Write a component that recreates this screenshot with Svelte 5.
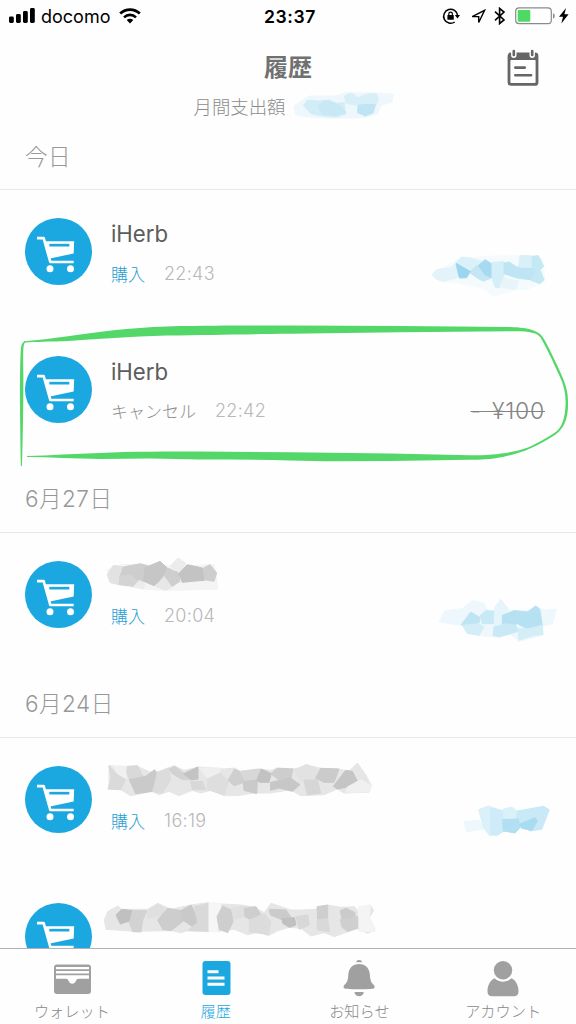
<script>
  // Mosaic patches: every polygon is [fill, points]
  const monthTotal = {
    width: 110, height: 40, box: '15 260 330 120', margin: -2,
    shapes: [
      ['#eef8fc', '24,320 55,300 70,290 150,290 180,280 270,282 322,285 318,308 285,318 275,342 240,354 130,357 60,352 28,345'],
      ['#d3edf8', '52,318 65,303 100,305 130,302 150,312 175,310 178,345 150,353 110,350 75,343'],
      ['#c8e8f5', '95,320 118,305 145,310 165,322 180,340 150,348 110,345'],
      ['#d8eff8', '175,290 195,281 215,295 245,284 270,282 277,300 270,318 240,322 215,318 180,312'],
      ['#bfe5f5', '216,318 240,315 268,316 262,340 238,350 215,340']
    ]
  };

  const amountBlobs = [
    {
      width: 140, height: 60, box: '0 0 420 180', margin: -15,
      shapes: [
        ['#f5fbfd', '38,95 70,75 110,50 190,40 300,38 368,45 375,115 320,140 290,140 220,160 190,135 100,118 60,115'],
        ['#e2f4fa', '36,95 50,80 90,74 108,62 118,90 110,105 70,115 48,108'],
        ['#daf1f9', '108,60 125,42 150,45 185,55 180,75 155,82'],
        ['#c3e7f5', '148,88 170,68 192,85 215,104 190,115 170,104'],
        ['#9bd6ee', '108,61 151,85 140,104 118,105'],
        ['#a5daf0', '175,68 195,50 214,62 215,104 195,95'],
        ['#d5eff9', '216,58 250,56 252,104 238,135 225,132 216,105'],
        ['#bfe5f4', '252,60 268,57 290,72 335,72 352,82 332,110 290,105 252,92'],
        ['#d9f0f8', '300,38 335,38 340,74 296,72'],
        ['#c5e8f5', '336,40 355,38 371,70 360,80 372,110 360,122 332,112 350,85 337,72'],
        ['#e7f5fb', '250,104 295,115 288,140 262,136 240,130']
      ]
    },
    {
      width: 140, height: 60, box: '18 2 420 180', margin: -20,
      shapes: [
        ['#eef8fc', '60,110 78,76 130,70 160,45 195,55 205,75 230,75 245,42 270,75 335,75 355,62 375,75 412,72 400,115 372,122 370,150 300,168 275,148 225,155 180,150 145,144 130,120'],
        ['#bfe5f4', '127,118 155,80 182,96 180,115 150,125'],
        ['#c8e9f6', '183,92 200,76 228,78 224,115 190,115'],
        ['#d4eef8', '130,120 180,115 195,125 180,150 145,144'],
        ['#e5f5fb', '228,65 245,42 268,72 250,88 248,118 225,122'],
        ['#b6e1f3', '250,90 285,76 325,80 350,62 362,72 370,120 325,130 295,115 275,122 250,115'],
        ['#c9e9f6', '225,125 262,115 290,120 298,138 275,145 240,155 222,150'],
        ['#d4eef8', '328,130 370,120 372,148 345,150 300,165 298,130']
      ]
    },
    {
      width: 130, height: 60, box: '0 0 390 180', margin: -25,
      shapes: [
        ['#eef8fc', '72,92 118,88 130,115 80,122'],
        ['#daf1f9', '116,56 145,45 190,60 190,120 150,135 130,110'],
        ['#cfebf7', '152,52 190,60 192,120 170,134 152,130'],
        ['#d9f1f9', '190,55 215,48 238,65 230,85 192,84'],
        ['#c9e9f6', '232,60 310,46 328,56 305,115 270,120 230,90'],
        ['#b3dff2', '188,86 235,84 240,110 225,126 190,120'],
        ['#a9dcf1', '238,100 285,80 292,90 275,118 245,112']
      ]
    }
  ];

  const titleBlobs = [
    {
      width: 120, height: 44, box: '40 13 360 132',
      shapes: [
        ['#f4f4f4', '50,60 90,45 200,45 240,50 262,25 285,48 370,45 378,90 382,118 260,122 200,122 135,115 60,100'],
        ['#e2e2e2', '50,75 68,47 98,52 85,105 58,98'],
        ['#cdcdcd', '98,52 150,42 175,50 165,95 140,98 120,90 88,82'],
        ['#d4d4d4', '86,80 120,75 142,95 130,110 86,105'],
        ['#c6c6c6', '162,55 208,35 230,55 215,88 190,108 160,95'],
        ['#cecece', '230,55 262,68 268,95 245,110 220,85'],
        ['#ececec', '240,48 262,25 285,40 270,65 245,60'],
        ['#c3c3c3', '264,72 290,45 335,55 342,92 305,95 275,98'],
        ['#cecece', '338,55 358,45 378,70 370,95 342,90'],
        ['#e7e7e7', '195,110 220,80 243,112 225,122'],
        ['#ececec', '130,110 145,92 162,100 158,118']
      ]
    },
    {
      width: 270, height: 44, box: '40 28 810 132',
      shapes: [
        ['#e6e6e6', '55,48 110,55 140,50 180,68 205,65 250,48 280,62 325,52 400,58 430,55 450,65 500,58 540,62 560,55 620,58 645,45 690,56 740,58 775,65 800,40 825,75 842,108 835,128 760,130 740,118 700,135 630,138 600,120 540,130 490,130 440,138 400,138 360,122 330,130 305,122 265,138 235,125 205,135 185,125 120,138 90,120 55,118'],
        ['#dadada', '55,48 80,75 105,88 90,120 52,118 62,85'],
        ['#f0f0f0', '65,48 108,50 108,88 80,72'],
        ['#d9d9d9', '110,50 140,48 160,85 118,92 108,70'],
        ['#cacaca', '116,90 165,80 192,60 204,85 185,125 135,132'],
        ['#dcdcdc', '200,70 235,55 240,90 215,130 186,126'],
        ['#d2d2d2', '236,58 252,50 285,75 310,90 275,90 245,72'],
        ['#c3c3c3', '278,72 322,52 322,88 302,90'],
        ['#d8d8d8', '300,95 335,95 345,120 305,120'],
        ['#efefef', '325,55 390,55 385,78 350,85'],
        ['#dedede', '350,88 390,70 412,95 402,135 350,120'],
        ['#cfcfcf', '412,92 432,58 455,70 460,98 430,108'],
        ['#d8d8d8', '450,65 510,58 505,90 462,95'],
        ['#cacaca', '458,95 500,92 498,132 460,122'],
        ['#c2c2c2', '498,92 512,58 542,72 535,98 508,98'],
        ['#cdcdcd', '540,72 560,56 607,58 600,88 570,95'],
        ['#c7c7c7', '540,98 600,85 628,105 605,125 565,115 540,122'],
        ['#e2e2e2', '608,60 650,45 680,60 670,90 630,95'],
        ['#d6d6d6', '640,92 680,90 690,130 650,136'],
        ['#cbcbcb', '675,85 690,56 745,58 730,98 700,98'],
        ['#c5c5c5', '728,110 765,62 785,65 802,98 770,112 740,118'],
        ['#f0f0f0', '770,112 810,90 842,108 835,126 765,130']
      ]
    },
    {
      width: 276, height: 44, box: '309 21 828 132',
      shapes: [
        ['#e6e6e6', '310,90 320,65 350,48 362,58 440,58 470,40 510,58 570,45 620,38 660,42 720,45 755,50 790,68 810,40 870,60 900,60 945,58 980,45 1020,52 1060,50 1070,62 1108,45 1118,62 1105,82 1122,120 1100,130 1060,112 1040,125 1000,140 970,128 930,138 900,115 865,112 830,122 802,137 775,126 740,134 700,118 650,124 560,122 540,128 510,122 400,124 315,118'],
        ['#c0c0c0', '345,75 362,58 395,62 388,92 358,102'],
        ['#d2d2d2', '395,62 438,62 425,90 420,126 395,125 385,98'],
        ['#e0e0e0', '440,62 470,42 490,55 485,75 440,85'],
        ['#cdcdcd', '470,90 500,55 540,62 545,95 510,122 485,118'],
        ['#c9c9c9', '540,62 570,45 595,95 575,110 545,90'],
        ['#d9d9d9', '580,50 624,40 624,124 560,122 590,98'],
        ['#f6f6f6', '624,38 660,42 655,80 650,125 624,124'],
        ['#cecece', '648,80 665,48 690,60 696,95 680,128 655,118'],
        ['#e0e0e0', '690,55 730,48 735,80 700,88'],
        ['#cecece', '730,55 765,50 780,75 750,90 732,80'],
        ['#dcdcdc', '745,90 790,72 810,95 802,134 745,125'],
        ['#cbcbcb', '805,58 855,60 870,82 840,88 808,75'],
        ['#c0c0c0', '843,86 880,83 885,105 865,112 845,100'],
        ['#d8d8d8', '885,80 920,75 925,105 895,118'],
        ['#cecece', '948,50 980,45 980,85 950,88'],
        ['#d9d9d9', '948,90 980,85 985,125 950,120'],
        ['#cbcbcb', '1018,62 1035,55 1062,68 1062,85 1022,85'],
        ['#cfcfcf', '1018,88 1072,80 1070,115 1040,125 1022,110'],
        ['#f4f4f4', '1072,50 1108,45 1105,80 1122,125 1075,125']
      ]
    }
  ];

  const sections = [
    {
      date: '今日',
      rows: [
        { title: 'iHerb', kind: '購入', time: '22:43', amountBlob: amountBlobs[0] },
        { title: 'iHerb', kind: 'キャンセル', time: '22:42', amount: '- ¥100', cancelled: true, marked: true }
      ]
    },
    {
      date: '6月27日',
      rows: [{ titleBlob: titleBlobs[0], kind: '購入', time: '20:04', amountBlob: amountBlobs[1] }]
    },
    {
      date: '6月24日',
      rows: [
        { titleBlob: titleBlobs[1], kind: '購入', time: '16:19', amountBlob: amountBlobs[2] },
        { titleBlob: titleBlobs[2] }
      ]
    }
  ];

  const tabs = [
    { id: 'wallet', label: 'ウォレット' },
    { id: 'history', label: '履歴' },
    { id: 'notice', label: 'お知らせ' },
    { id: 'account', label: 'アカウント' }
  ];
  let active = $state('history');
</script>

{#snippet mosaic(blob)}
  <svg class="mosaic" width={blob.width} height={blob.height} viewBox={blob.box} style:margin-right="{blob.margin ?? 0}px">
    {#each blob.shapes as [fill, points]}
      <polygon {points} {fill} stroke={fill} />
    {/each}
  </svg>
{/snippet}

<div class="app">
  <div class="status">
    <div class="status-left">
      <svg width="27" height="16" viewBox="0 0 27 16">
        <rect x="0" y="8.6" width="4.8" height="6.4" rx="1.4" />
        <rect x="7" y="6" width="4.8" height="9" rx="1.4" />
        <rect x="14" y="3" width="4.8" height="12" rx="1.4" />
        <rect x="21" y="0" width="4.8" height="15" rx="1.4" />
      </svg>
      <span class="carrier">docomo</span>
      <svg class="wifi" width="22" height="16" viewBox="0 0 22 16">
        <path d="M1.2 5.5C6.8.2 15.2.2 20.8 5.5" fill="none" stroke="#000" stroke-width="2.8" />
        <path d="M5 9.4c3.4-3.3 8.6-3.3 12 0" fill="none" stroke="#000" stroke-width="2.6" />
        <path d="M7.7 12c1.9-1.7 4.7-1.7 6.6 0L11 15.4z" />
      </svg>
    </div>
    <span class="clock">23:37</span>
    <div class="status-right">
      <svg width="18" height="18" viewBox="0 0 18 18">
        <path d="M12.7 15A7 7 0 1 1 15.6 8.5" fill="none" stroke="#000" stroke-width="1.5" />
        <path d="M12.9 8h5.1l-2.5 3.5z" />
        <rect x="5.4" y="8" width="6.4" height="4.8" rx=".6" />
        <path d="M6.8 8.4V6.9a1.8 1.8 0 0 1 3.6 0v1.5" fill="none" stroke="#000" stroke-width="1.2" />
      </svg>
      <svg class="loc" width="15" height="15" viewBox="0 0 15 15">
        <path d="M1.2 7.6 13.6 1.3 7.7 13.5V7.6z" fill="none" stroke="#000" stroke-width="1.4" />
      </svg>
      <svg class="bt" width="12" height="18" viewBox="0 0 12 18">
        <path d="m1 4.7 9 8.2-4.4 3.7V1.4L10 5.1l-9 8.2" fill="none" stroke="#000" stroke-width="1.6" />
      </svg>
      <svg class="battery" width="41" height="18" viewBox="0 0 41 18">
        <rect x=".7" y=".9" width="35.6" height="15.8" rx="3.4" fill="#fff" stroke="#8a8a8a" stroke-width="1.2" />
        <rect x="2.7" y="3" width="12.6" height="11.8" rx="1" fill="#4cd964" />
        <path d="M38 6.2c2.3.6 2.3 4.8 0 5.4z" fill="#8a8a8a" />
      </svg>
      <svg class="bolt" width="10" height="16" viewBox="0 0 10 16">
        <path d="M7 0 0 8.8h4L2.4 15.4 9.6 6.3H5.4z" />
      </svg>
    </div>
  </div>

  <header>
    <div class="heading">
      <h1>履歴</h1>
      <div class="total">
        <span>月間支出額</span>
        {@render mosaic(monthTotal)}
      </div>
    </div>
    <button class="calendar" aria-label="カレンダー">
      <svg width="32" height="38" viewBox="0 0 32 38">
        <rect x=".6" y="3.6" width="30.8" height="33.2" rx="3.4" fill="#666" />
        <rect x="3.4" y="11" width="25.2" height="23" rx="1" fill="#fff" />
        <path d="M6.8 2v4.3M25.2 2v4.3" stroke="#fff" stroke-width="5.4" stroke-linecap="round" />
        <path d="M6.800 2v4M25.200 2v4" stroke="#666" stroke-width="2.6" stroke-linecap="round" />
        <path d="M8.300 18.600h9.500M8.300 26.300h15.800" stroke="#666" stroke-width="2.600" stroke-linecap="round" />
      </svg>
    </button>
  </header>

  <main>
    {#each sections as section}
      <section>
        <h2>{section.date}</h2>
        {#each section.rows as row}
          <div class="row">
            <svg class="cart" width="67" height="67" viewBox="0 0 201 201">
              <circle cx="100.5" cy="100.5" r="100.5" fill="#1ba8e1" />
              <path d="M36 60.500h20l20 71.500h70" fill="none" stroke="#fff" stroke-width="8" stroke-linejoin="round" />
              <path d="M58 69.500h89.500l-1.500 37-71 15z" fill="#fff" />
              <path d="M73 77.500h60v8H73z" fill="#1ba8e1" />
              <circle cx="75" cy="152" r="10.500" fill="#fff" />
              <circle cx="136.500" cy="152" r="10.500" fill="#fff" />
            </svg>
            <div class="info">
              <div class="title">
                {#if row.titleBlob}
                  {@render mosaic(row.titleBlob)}
                {:else}
                  {row.title}
                {/if}
              </div>
              {#if row.kind}
                <div class="meta">
                  <span class="kind" class:cancelled={row.cancelled}>{row.kind}</span>
                  <span class="time">{row.time}</span>
                </div>
              {/if}
            </div>
            <div class="amount">
              {#if row.amountBlob}
                {@render mosaic(row.amountBlob)}
              {:else if row.amount}
                <span>{row.amount}</span>
              {/if}
            </div>
            {#if row.marked}
              <!-- hand-drawn green marker round the cancelled purchase -->
              <svg class="marker" width="576" height="150" viewBox="0 320 576 150">
                <path d="M23.5 341.300C40 340.300 55 338 68 336.300C95 332 130 327.500 167 326.400C220 325.400 250 325.600 290 325.600L400 326L510 326.900C530 327.500 538 331 542 336C549 347 553 357 557.500 366C562 376 566 384 567.500 394C568.700 405 568 414 565.500 421C562 430 557 434 550 438C535 447 522 453 503 457C490 459.500 480 459.700 470 459.700L390 461L325 461.200L290 460.500C260 459.400 230 459.600 200 459.400L150 458.600L100 459C75 458.400 50 457.200 27 456.900V456.100C50 455.300 75 454 100 453C130 451.600 170 451.600 200 451.600L290 452.300L390 453.600L470 455.300C495 455.300 512 453 528 447.500C540 442 550 436 557 431C562 426 565 419 565.600 404C566 388 561 379 555.800 368C550 355 546 347 540.500 337.500C537 332.500 530 331 510 331.200L400 332.300L290 333.800C240 334.200 210 335 167 335.500C130 336.600 95 339.300 68 341C50 341.800 35 341.700 24.500 342.600z" />
                <path d="M25 341.300C22 342.500 21 345 20.700 352C19.500 375 20 410 20.900 466h1.100C23 430 23.600 400 23.300 370C23.200 355 22.700 345 25 342.500z" />
              </svg>
            {/if}
          </div>
        {/each}
      </section>
    {/each}
  </main>

  <nav>
    {#each tabs as tab}
      <button class="tab" class:active={active === tab.id} onclick={() => (active = tab.id)}>
        <svg width="38" height="38" viewBox="0 0 38 38" fill="currentColor">
          {#if tab.id === 'wallet'}
            <rect x="1" y="4.500" width="37" height="29.500" rx="3" />
            <path d="M3 7h33v2.200H3zM3 11h33v2.500H3zM3 15.300h33v3.400H25.500c-1.500 0-2 .8-2.500 2-1.500 4-6 4-7.500 0-.5-1.200-1-2-2.500-2H3z" fill="#fff" />
          {:else if tab.id === 'history'}
            <rect x="5.500" y="1" width="28" height="34" rx="3" />
            <path d="M10.500 11.800h11M10.500 18h17M10.500 24.200h17" stroke="#fff" stroke-width="2.900" />
          {:else if tab.id === 'notice'}
            <path d="M16.300 2.300a2.800 2.300 0 0 1 5.600 0zM14.500 32h9.200a4.600 4.300 0 0 1-9.200 0z" />
            <path d="M19.100 4c6.500 0 10.600 4.500 10.800 11 .2 5 1.200 7.500 3.200 9.300 1.300 1.200 1.600 2 1.500 3.200-.1 1.500-5 1.800-15.500 1.800S3.700 29 3.600 27.500c-.1-1.200.2-2 1.500-3.200 2-1.800 3-4.300 3.200-9.300C8.500 8.500 12.600 4 19.100 4z" />
          {:else}
            <circle cx="19" cy="10.300" r="9.200" />
            <path d="M10.500 18.300c4.700 4.500 12.300 4.500 17 0 4.800 2.500 7 7.500 7 13.200 0 3.300-1.700 4.700-4.500 4.700H8c-2.800 0-4.500-1.400-4.500-4.700 0-5.700 2.200-10.700 7-13.200z" />
          {/if}
        </svg>
        <span>{tab.label}</span>
      </button>
    {/each}
  </nav>
</div>

<style>
  :global(body) {
    margin: 0;
    background: #fff;
  }

  .app {
    display: flex;
    flex-direction: column;
    width: 576px;
    height: 1024px;
    overflow: hidden;
    background: #fefefe;
    font-family: Inter, "Noto Sans CJK JP", sans-serif;
    font-weight: 300;
  }

  svg { display: block; flex-shrink: 0; }
  button { border: 0; padding: 0; background: none; font: inherit; }
  h1, h2 { margin: 0; }

  .mosaic polygon { stroke-width: 3; stroke-linejoin: round; }

  .status {
    display: grid;
    grid-template-columns: 1fr auto 1fr;
    align-items: center;
    height: 32px;
    padding: 0 7px 0 9px;
    box-sizing: border-box;
    color: #000;
  }
  .status-left, .status-right { display: flex; align-items: center; }
  .status-right { justify-content: flex-end; }
  .carrier { margin-left: 5px; font-size: 18px; font-weight: 400; }
  .wifi { margin-left: 9px; }
  .clock { margin-left: 2px; font-size: 17.6px; font-weight: 600; letter-spacing: 0.6px; }
  .loc { margin-left: 11px; }
  .bt { margin-left: 8px; }
  .battery { margin-left: 9px; }
  .bolt { margin-left: 3px; }

  header {
    display: grid;
    grid-template-columns: 1fr 32px;
    height: 90.5px;
    padding: 0 37px 0 69px;
  }
  .heading { display: flex; flex-direction: column; align-items: center; }
  h1 {
    margin-top: 18px;
    font-size: 24px;
    line-height: 36px;
    font-weight: 700;
    color: #707070;
  }
  .total {
    display: flex;
    align-items: center;
    height: 40px;
    margin-left: 17px;
    font-size: 18.4px;
    color: #8c8c8c;
  }
  .total span { margin-right: 6px; }
  .calendar { align-self: start; margin-top: 17px; }

  main { flex: 1; min-height: 0; overflow: hidden; }

  h2 {
    height: 67.5px;
    padding: 0 25px;
    box-sizing: border-box;
    border-bottom: 1.5px solid #e8e8e8;
    font-size: 22.5px;
    font-weight: 300;
    line-height: 68px;
    letter-spacing: 0.5px;
    color: #989898;
  }

  .row {
    position: relative;
    display: flex;
    align-items: flex-start;
    height: 137.5px;
    padding: 28px 31px 0 25px;
    box-sizing: border-box;
  }
  .info { margin-left: 19px; }
  .title {
    display: flex;
    align-items: center;
    height: 31px;
    font-size: 22.2px;
    font-weight: 400;
    color: #5c5c5c;
  }
  .title .mosaic { margin-left: -7px; }
  .meta {
    display: flex;
    align-items: center;
    gap: 19px;
    height: 32px;
    margin-top: 8px;
  }
  .kind { font-size: 17px; color: #1f9dd2; }
  .kind.cancelled { color: #8c8c8c; }
  .time { font-size: 18px; letter-spacing: 0.3px; color: #b8b8b8; }
  .amount {
    display: flex;
    align-items: center;
    height: 32px;
    margin: 39px 0 0 auto;
    font-size: 23px;
    color: #858585;
  }
  .amount span {
    letter-spacing: 0.8px;
    word-spacing: 3px;
    text-decoration: line-through;
    text-decoration-thickness: 1.3px;
  }
  .marker {
    position: absolute;
    left: 0;
    top: -7.5px;
    fill: #53d769;
  }

  nav {
    display: flex;
    height: 76px;
    padding-right: 1px;
    box-sizing: border-box;
    border-top: 1px solid #b2b2b2;
    background: #fefefe;
  }
  .tab {
    display: flex;
    flex: 1;
    flex-direction: column;
    align-items: center;
    padding-top: 11px;
    font-size: 15.2px;
    line-height: 24px;
    color: #a0a0a0;
  }
  .tab span { margin-top: 2px; color: #888; }
  .tab.active, .tab.active span { color: #1ba8e1; }
</style>
